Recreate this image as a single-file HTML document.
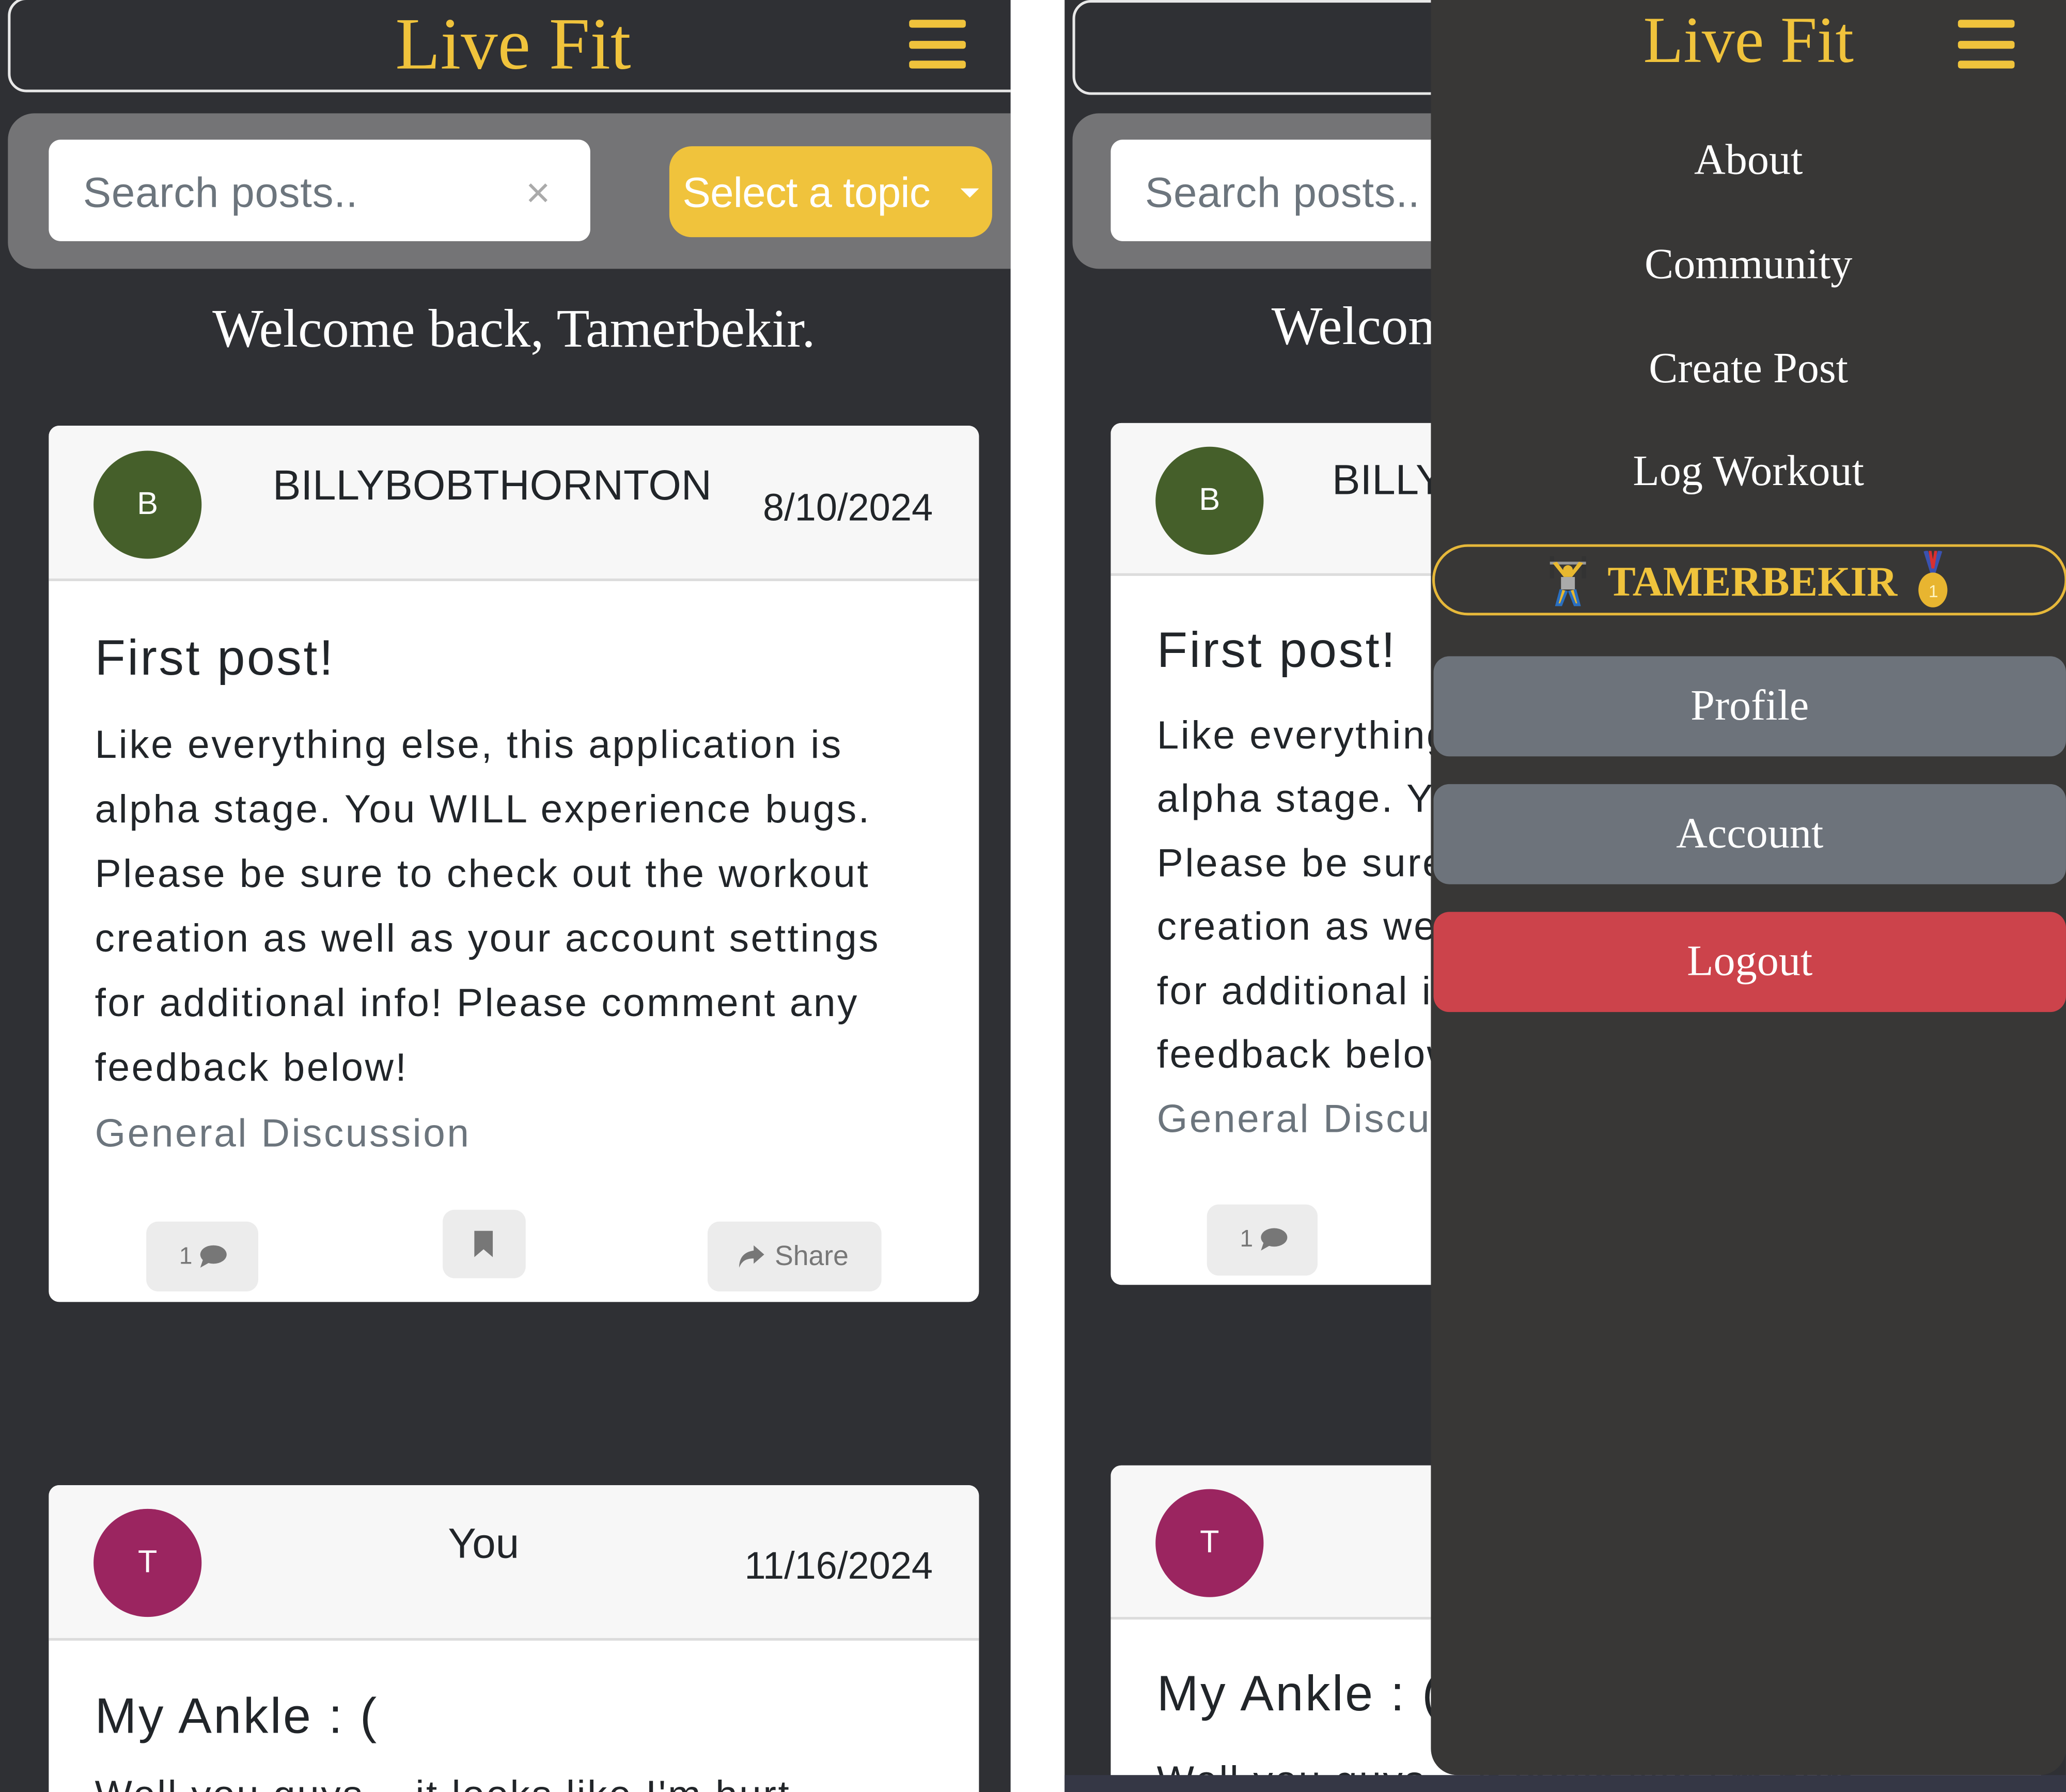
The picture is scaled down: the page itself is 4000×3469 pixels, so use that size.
<!DOCTYPE html>
<html><head><meta charset="utf-8">
<style>
html,body{margin:0;padding:0;background:#fff;}
body{width:4000px;height:3468px;overflow:hidden;position:relative;}
#w{position:absolute;left:0;top:0;width:1568px;height:1360px;transform:scale(2.551);transform-origin:0 0;}
.a{position:absolute;}
.panel{position:absolute;top:0;height:1360px;background:#2f3034;overflow:hidden;}
.serif{font-family:"Liberation Serif",serif;}
.sans{font-family:"Liberation Sans",sans-serif;}
.nw{white-space:nowrap;}
.logo{color:#f0c33c;font-size:56px;line-height:60px;}
.ham{width:43px;height:6px;background:#f0c33c;border-radius:2px;position:absolute;}
.card{position:absolute;background:#fff;border-radius:8px;overflow:hidden;}
.chead{position:absolute;left:0;right:0;top:0;background:#f7f7f7;border-bottom:2px solid #dcdcdc;}
.av{position:absolute;width:82px;height:82px;border-radius:50%;color:#fff;font-size:24px;line-height:82px;text-align:center;font-family:"Liberation Sans",sans-serif;}
.body{font-family:"Liberation Sans",sans-serif;font-size:30px;color:#212529;line-height:40px;letter-spacing:1.4px;}
.ttl{font-family:"Liberation Sans",sans-serif;font-size:38px;line-height:44px;color:#212529;letter-spacing:1.4px;}
.btn{position:absolute;background:#ececec;border-radius:9px;color:#777;font-family:"Liberation Sans",sans-serif;}
.menu{color:#fff;font-size:33px;line-height:40px;text-align:center;width:482px;left:0;}
.mb{position:absolute;left:2px;width:480px;height:76px;border-radius:12px;color:#fff;font-size:33px;line-height:76px;text-align:center;}
</style></head><body><div id="w">

<!-- LEFT PANEL -->
<div class="panel" style="left:0;width:767px;">
  <div class="a" style="left:6px;top:-2px;width:780px;height:68px;border:2px solid #e8e8e8;border-radius:14px;"></div>
  <div class="a serif logo nw" style="left:300px;top:4px;">Live Fit</div>
  <div class="ham" style="left:690px;top:15px;"></div>
  <div class="ham" style="left:690px;top:31px;"></div>
  <div class="ham" style="left:690px;top:46px;"></div>

  <div class="a" style="left:6px;top:86px;width:790px;height:118px;background:#747476;border-radius:20px;"></div>
  <div class="a" style="left:37px;top:106px;width:411px;height:77px;background:#fff;border-radius:9px;"></div>
  <div class="a sans nw" style="left:63px;top:126px;font-size:32px;line-height:40px;color:#6c757d;letter-spacing:0.3px;">Search posts..</div>
  <div class="a sans" style="left:399px;top:126px;font-size:32px;line-height:40px;color:#aaa;">×</div>
  <div class="a" style="left:508px;top:111px;width:245px;height:69px;background:#f0c33c;border-radius:17px;"></div>
  <div class="a sans nw" style="left:518px;top:126px;font-size:32px;line-height:40px;color:#fff;letter-spacing:-0.3px;">Select a topic</div>
  <div class="a" style="left:729px;top:143px;width:0;height:0;border-left:7px solid transparent;border-right:7px solid transparent;border-top:7px solid #fff;"></div>

  <div class="a serif nw" style="left:0;width:780px;text-align:center;top:226px;font-size:41px;line-height:46px;color:#fff;">Welcome back, Tamerbekir.</div>

  <div class="card" style="left:37px;top:323px;width:706px;height:665px;">
    <div class="chead" style="height:116px;"></div>
    <div class="av" style="left:34px;top:19px;background:#455f2a;">B</div>
    <div class="a sans nw" style="left:170px;top:25px;font-size:32px;line-height:40px;color:#212529;">BILLYBOBTHORNTON</div>
    <div class="a sans nw" style="right:35px;top:43px;font-size:29px;line-height:40px;color:#212529;">8/10/2024</div>
    <div class="a ttl nw" style="left:35px;top:155px;">First post!</div>
    <div class="a body nw" style="left:35px;top:223px;">Like everything else, this application is</div>
    <div class="a body nw" style="left:35px;top:272px;">alpha stage. You WILL experience bugs.</div>
    <div class="a body nw" style="left:35px;top:321px;">Please be sure to check out the workout</div>
    <div class="a body nw" style="left:35px;top:370px;">creation as well as your account settings</div>
    <div class="a body nw" style="left:35px;top:419px;">for additional info! Please comment any</div>
    <div class="a body nw" style="left:35px;top:468px;">feedback below!</div>
    <div class="a body nw" style="left:35px;top:518px;color:#6c757d;">General Discussion</div>
    <div class="btn" style="left:74px;top:604px;width:85px;height:53px;">
      <span class="a" style="left:25px;top:15px;font-size:18px;line-height:22px;">1</span>
      <svg class="a" style="left:38px;top:17px;" width="24" height="20" viewBox="0 0 24 20"><ellipse cx="13" cy="8" rx="10" ry="7" fill="#777"/><path d="M5 12 L3 18 L10 14 Z" fill="#777"/></svg>
    </div>
    <div class="btn" style="left:299px;top:595px;width:63px;height:52px;">
      <svg class="a" style="left:23px;top:16px;" width="16" height="20" viewBox="0 0 16 20"><path d="M1 0 H15 V20 L8 14 L1 20 Z" fill="#777"/></svg>
    </div>
    <div class="btn" style="left:500px;top:604px;width:132px;height:53px;">
      <svg class="a" style="left:22px;top:16px;" width="22" height="20" viewBox="0 0 22 20"><path d="M13 2 L21 9 L13 16 V12 C7 12 4 14 2 19 C2 11 6 7 13 6 Z" fill="#777"/></svg>
      <span class="a nw" style="left:51px;top:14px;font-size:21px;line-height:26px;">Share</span>
    </div>
  </div>

  <div class="card" style="left:37px;top:1127px;width:706px;height:260px;">
    <div class="chead" style="height:116px;"></div>
    <div class="av" style="left:34px;top:18px;background:#9b2560;">T</div>
    <div class="a sans nw" style="left:0;width:660px;text-align:center;top:24px;font-size:32px;line-height:40px;color:#212529;">You</div>
    <div class="a sans nw" style="right:35px;top:42px;font-size:29px;line-height:40px;color:#212529;">11/16/2024</div>
    <div class="a ttl nw" style="left:35px;top:154px;">My Ankle : (</div>
    <div class="a body nw" style="left:35px;top:216px;">Well you guys... it looks like I'm hurt</div>
  </div>
</div>

<!-- RIGHT PANEL -->
<div class="panel" style="left:808px;width:760px;">
  <div class="a" style="left:6px;top:0px;width:780px;height:68px;border:2px solid #e8e8e8;border-radius:14px;"></div>
  <div class="a" style="left:6px;top:86px;width:790px;height:118px;background:#747476;border-radius:20px;"></div>
  <div class="a" style="left:35px;top:106px;width:411px;height:77px;background:#fff;border-radius:9px;"></div>
  <div class="a sans nw" style="left:61px;top:126px;font-size:32px;line-height:40px;color:#6c757d;letter-spacing:0.3px;">Search posts..</div>
  <div class="a serif nw" style="left:157px;top:224px;font-size:41px;line-height:46px;color:#fff;">Welcome back, Tamerbekir.</div>

  <div class="card" style="left:35px;top:321px;width:706px;height:654px;">
    <div class="chead" style="height:114px;"></div>
    <div class="av" style="left:34px;top:18px;background:#455f2a;">B</div>
    <div class="a sans nw" style="left:168px;top:23px;font-size:32px;line-height:40px;color:#212529;">BILLYBOBTHORNTON</div>
    <div class="a ttl nw" style="left:35px;top:151px;">First post!</div>
    <div class="a body nw" style="left:35px;top:218px;">Like everything else, this application is</div>
    <div class="a body nw" style="left:35px;top:266px;">alpha stage. You WILL experience bugs.</div>
    <div class="a body nw" style="left:35px;top:315px;">Please be sure to check out the workout</div>
    <div class="a body nw" style="left:35px;top:363px;">creation as well as your account settings</div>
    <div class="a body nw" style="left:35px;top:412px;">for additional info! Please comment any</div>
    <div class="a body nw" style="left:35px;top:460px;">feedback below!</div>
    <div class="a body nw" style="left:35px;top:509px;color:#6c757d;">General Discussion</div>
    <div class="btn" style="left:73px;top:593px;width:84px;height:54px;">
      <span class="a" style="left:25px;top:15px;font-size:18px;line-height:22px;">1</span>
      <svg class="a" style="left:38px;top:17px;" width="24" height="20" viewBox="0 0 24 20"><ellipse cx="13" cy="8" rx="10" ry="7" fill="#777"/><path d="M5 12 L3 18 L10 14 Z" fill="#777"/></svg>
    </div>
  </div>

  <div class="card" style="left:35px;top:1112px;width:706px;height:300px;">
    <div class="chead" style="height:115px;"></div>
    <div class="av" style="left:34px;top:18px;background:#9b2560;">T</div>
    <div class="a ttl nw" style="left:35px;top:152px;">My Ankle : (</div>
    <div class="a body nw" style="left:35px;top:220px;">Well you guys... it looks like I'm hurt</div>
  </div>
</div>

<!-- OVERLAY MENU -->
<div class="a" style="left:1086px;top:0;width:482px;height:1347px;background:#383736;border-radius:0 0 20px 20px;overflow:hidden;">
  <div class="a serif nw" style="left:0;width:482px;text-align:center;top:2px;color:#f0c33c;font-size:50px;line-height:56px;">Live Fit</div>
  <div class="ham" style="left:400px;top:15px;"></div>
  <div class="ham" style="left:400px;top:31px;"></div>
  <div class="ham" style="left:400px;top:46px;"></div>
  <div class="a serif menu nw" style="top:102px;">About</div>
  <div class="a serif menu nw" style="top:181px;">Community</div>
  <div class="a serif menu nw" style="top:260px;">Create Post</div>
  <div class="a serif menu nw" style="top:338px;">Log Workout</div>
  <div class="a" style="left:1px;top:413px;width:478px;height:50px;border:2px solid #e6b83a;border-radius:27px;"></div>
  <div class="a nw" style="left:0;width:482px;top:418px;text-align:center;line-height:42px;">
    <svg width="36" height="40" viewBox="0 0 34 38" style="vertical-align:-9px;"><rect x="4" y="1" width="3" height="16" fill="#333"/><rect x="27" y="1" width="3" height="16" fill="#333"/><rect x="4" y="5" width="26" height="2" fill="#999"/><circle cx="17" cy="11" r="3.5" fill="#e8b830"/><path d="M6 6 L14 16 L20 16 L28 6 L25 5 L19 13 L15 13 L9 5 Z" fill="#e8b830"/><rect x="12" y="16" width="10" height="9" fill="#aaa"/><path d="M12 25 L9 36 L12 36 L16 26 M22 25 L25 36 L22 36 L18 26" fill="#e8b830" stroke="#2a6fc0" stroke-width="2"/></svg>
    <span class="serif" style="color:#f0c33c;font-weight:bold;font-size:32px;margin:0 8px;">TAMERBEKIR</span>
    <svg width="30" height="44" viewBox="0 0 26 40" style="vertical-align:-10px;"><path d="M8 0 L13 16 L18 0" fill="none" stroke="#3a52b0" stroke-width="3"/><path d="M11 0 L13 12 L15 0" fill="none" stroke="#d83030" stroke-width="2"/><ellipse cx="13" cy="27" rx="10" ry="12" fill="#e8b530"/><text x="10" y="32" font-size="12" fill="#fff4c0" font-family="Liberation Sans">1</text></svg>
  </div>
  <div class="a serif mb nw" style="top:498px;background:#6d737b;">Profile</div>
  <div class="a serif mb nw" style="top:595px;background:#6d737b;">Account</div>
  <div class="a serif mb nw" style="top:692px;background:#cc434b;">Logout</div>
</div>
<div class="a" style="left:808px;top:1347px;width:760px;height:13px;background:#353745;"></div>

</div></body></html>
